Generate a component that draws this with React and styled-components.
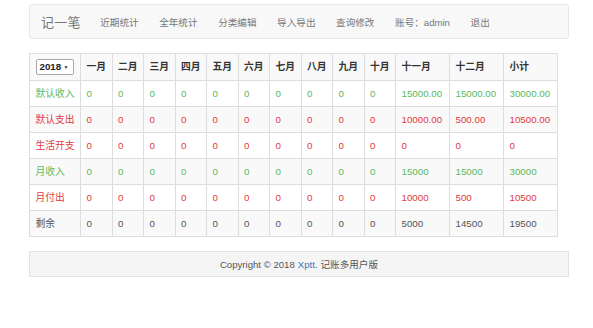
import React from 'react';
import styled, { createGlobalStyle } from 'styled-components';

const GlobalStyle = createGlobalStyle`
  html, body {
    margin: 0;
    padding: 0;
    background: #fff;
  }
  body {
    font-family: "Liberation Sans", Arial, "Noto Sans CJK SC", sans-serif;
    font-size: 9.75px;
    color: #333;
  }
`;

const Page = styled.div`
  width: 540px;
  margin: 4px 0 0 29px;
  display: flex;
  flex-direction: column;
`;

const Navbar = styled.nav`
  height: 33px;
  display: flex;
  align-items: center;
  padding: 0 11px;
  background: #f8f8f8;
  border: 1px solid #e7e7e7;
  border-radius: 3px;
`;

const Brand = styled.span`
  font-size: 13px;
  color: #777;
  margin-right: 9px;
  letter-spacing: 0.3px;
`;

const NavLink = styled.a`
  color: #777;
  font-size: 9.6px;
  padding: 0 10.3px;
  text-decoration: none;
  white-space: nowrap;
`;

const Table = styled.table`
  margin-top: 14px;
  border-collapse: collapse;
  align-self: flex-start;
`;

const Row = styled.tr`
  background: ${(p) => (p.$striped ? '#f9f9f9' : '#fff')};
`;

const Cell = styled.td`
  border: 1px solid #ddd;
  padding: 0 5.5px;
  height: ${(p) => (p.$head ? '26px' : '25px')};
  line-height: 14px;
  white-space: nowrap;
  text-align: left;
  font-weight: ${(p) => (p.$head ? 'bold' : 'normal')};
  color: ${(p) => (p.$tone === 'green' ? '#5cb85c' : p.$tone === 'red' ? '#e4393c' : p.$tone === 'plain' ? '#555' : '#333')};
  min-width: ${(p) => (p.$wide ? '42px' : '0')};
`;

const YearSelect = styled.span`
  display: inline-flex;
  align-items: center;
  justify-content: space-between;
  box-sizing: border-box;
  width: 38px;
  height: 16px;
  padding: 0 4px 0 3px;
  border: 1px solid #a9a9a9;
  border-radius: 2px;
  background: #fff;
  font-weight: bold;
  font-size: 9.75px;
  color: #222;
`;

const Caret = styled.span`
  font-size: 5px;
  color: #333;
`;

const Footer = styled.footer`
  margin-top: 14px;
  height: 24px;
  display: flex;
  align-items: center;
  justify-content: center;
  background: #f5f5f5;
  border: 1px solid #e3e3e3;
  color: #555;
  font-size: 9.6px;
`;

const FooterLink = styled.a`
  color: #337ab7;
  text-decoration: none;
  margin: 0 3px;
`;

const months = ['一月', '二月', '三月', '四月', '五月', '六月', '七月', '八月', '九月', '十月', '十一月', '十二月', '小计'];

const zeros = Array(10).fill('0');

const rows = [
  { label: '默认收入', tone: 'green', values: [...zeros, '15000.00', '15000.00', '30000.00'] },
  { label: '默认支出', tone: 'red', values: [...zeros, '10000.00', '500.00', '10500.00'] },
  { label: '生活开支', tone: 'red', values: [...zeros, '0', '0', '0'] },
  { label: '月收入', tone: 'green', values: [...zeros, '15000', '15000', '30000'] },
  { label: '月付出', tone: 'red', values: [...zeros, '10000', '500', '10500'] },
  { label: '剩余', tone: 'plain', values: [...zeros, '5000', '14500', '19500'] },
];

const navItems = ['近期统计', '全年统计', '分类编辑', '导入导出', '查询修改', '账号：admin', '退出'];

export default function App() {
  return (
    <>
      <GlobalStyle />
      <Page>
        <Navbar>
          <Brand>记一笔</Brand>
          {navItems.map((item) => (
            <NavLink key={item}>{item}</NavLink>
          ))}
        </Navbar>

        <Table>
          <tbody>
            <Row $striped>
              <Cell $head>
                <YearSelect>
                  2018 <Caret>▼</Caret>
                </YearSelect>
              </Cell>
              {months.map((m) => (
                <Cell $head key={m}>
                  {m}
                </Cell>
              ))}
            </Row>
            {rows.map((r, i) => (
              <Row key={r.label} $striped={i % 2 === 1}>
                <Cell $tone={r.tone}>{r.label}</Cell>
                {r.values.map((v, j) => (
                  <Cell key={j} $tone={r.tone} $wide={j >= 10}>
                    {v}
                  </Cell>
                ))}
              </Row>
            ))}
          </tbody>
        </Table>

        <Footer>
          Copyright © 2018 <FooterLink>Xptt.</FooterLink> 记账多用户版
        </Footer>
      </Page>
    </>
  );
}
